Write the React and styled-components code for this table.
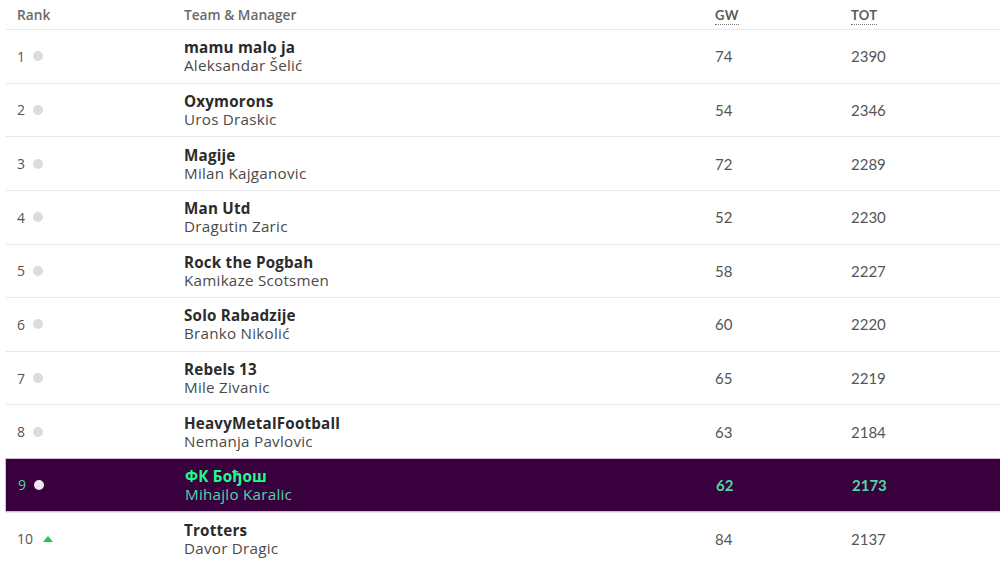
import React from "react";
import styled, { createGlobalStyle, css } from "styled-components";

const Global = createGlobalStyle`
  html, body { margin: 0; padding: 0; background: #fff; }
  body { font-family: "Open Sans", "Noto Sans", sans-serif; }
`;

const Table = styled.div`
  margin-left: 6px;
  width: 1000px;
`;

const cols = css`
  display: grid;
  grid-template-columns: 167px 531px 136px 1fr;
`;

const HeadRow = styled.div`
  ${cols}
  height: 29px;
  align-items: center;
`;

const HeadCell = styled.div`
  padding-left: ${(p) => p.$pad || 0}px;
  font-size: 13.7px;
  font-weight: 600;
  color: #6a6a6a;
`;

const Abbr = styled.span`
  font-family: "Lato", sans-serif;
  font-weight: 700;
  font-size: 13px;
  letter-spacing: 0.3px;
  color: #5a5a5a;
  border-bottom: 1px dotted #777;
  padding-bottom: 1px;
`;

const Row = styled.div`
  ${cols}
  height: 53.625px;
  box-sizing: border-box;
  align-items: center;
  border-top: 1px solid #e8e8e8;
  ${(p) =>
    p.$active &&
    css`
      background: #38003c;
      border: 1px solid #d9b8d9;
      border-right: none;
      margin-left: -1px;
      padding-left: 1px;
    `}
`;

const RankCell = styled.div`
  padding-left: 11px;
  display: flex;
  align-items: center;
  gap: 8px;
  font-size: 14px;
  color: ${(p) => (p.$active ? "#4fd6a6" : "#555")};
`;

const Dot = styled.span`
  width: 10px;
  height: 10px;
  border-radius: 50%;
  background: ${(p) => (p.$active ? "#f3e6f3" : "#dcdcdc")};
`;

const Up = styled.span`
  width: 0;
  height: 0;
  border-left: 5.5px solid transparent;
  border-right: 5.5px solid transparent;
  border-bottom: 6px solid #1ec846;
  margin-left: 2px;
`;

const TeamCell = styled.div`
  display: flex;
  flex-direction: column;
  padding-left: 11px;
`;

const TeamName = styled.div`
  font-size: 15.2px;
  line-height: 18px;
  letter-spacing: 0.2px;
  font-weight: 700;
  color: ${(p) => (p.$active ? "#1aff8c" : "#2b2b2b")};
`;

const Manager = styled.div`
  font-size: 15.2px;
  line-height: 18px;
  letter-spacing: 0.25px;
  font-weight: 400;
  color: ${(p) => (p.$active ? "#4fd6a6" : "#4a4a4a")};
`;

const Num = styled.div`
  padding-left: ${(p) => p.$pad || 0}px;
  font-family: "Lato", sans-serif;
  font-size: 15px;
  color: ${(p) => (p.$active ? "#4fd6a6" : "#555")};
  font-weight: ${(p) => (p.$active ? 700 : 400)};
`;

const data = [
  [1, "mamu malo ja", "Aleksandar Šelić", 74, 2390],
  [2, "Oxymorons", "Uros Draskic", 54, 2346],
  [3, "Magije", "Milan Kajganovic", 72, 2289],
  [4, "Man Utd", "Dragutin Zaric", 52, 2230],
  [5, "Rock the Pogbah", "Kamikaze Scotsmen", 58, 2227],
  [6, "Solo Rabadzije", "Branko Nikolić", 60, 2220],
  [7, "Rebels 13", "Mile Zivanic", 65, 2219],
  [8, "HeavyMetalFootball", "Nemanja Pavlovic", 63, 2184],
  [9, "ФК Бођош", "Mihajlo Karalic", 62, 2173],
  [10, "Trotters", "Davor Dragic", 84, 2137],
];

export default function App() {
  return (
    <>
      <Global />
      <Table>
        <HeadRow>
          <HeadCell $pad={11}>Rank</HeadCell>
          <HeadCell $pad={11}>Team &amp; Manager</HeadCell>
          <HeadCell $pad={11}>
            <Abbr>GW</Abbr>
          </HeadCell>
          <HeadCell $pad={11}>
            <Abbr>TOT</Abbr>
          </HeadCell>
        </HeadRow>
        {data.map(([rank, team, mgr, gw, tot]) => {
          const active = rank === 9;
          return (
            <Row key={rank} $active={active}>
              <RankCell $active={active}>
                {rank}
                {rank === 10 ? <Up /> : <Dot $active={active} />}
              </RankCell>
              <TeamCell>
                <TeamName $active={active}>{team}</TeamName>
                <Manager $active={active}>{mgr}</Manager>
              </TeamCell>
              <Num $pad={11} $active={active}>{gw}</Num>
              <Num $pad={11} $active={active}>{tot}</Num>
            </Row>
          );
        })}
      </Table>
    </>
  );
}
